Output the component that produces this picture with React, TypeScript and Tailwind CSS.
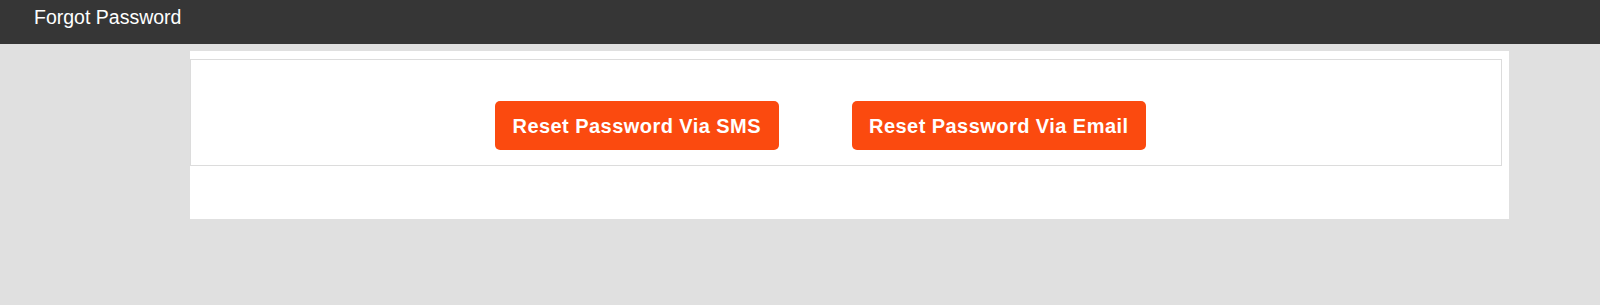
import React from "react";

export default function App() {
  return (
    <div className="min-h-[305px] w-full bg-[#e0e0e0] font-['Liberation_Sans',Arial,sans-serif]">
      <header className="h-[44px] bg-[#363636] pl-[34px] pt-[6px]">
        <h1 className="text-[19.5px] leading-[23px] font-normal text-white">Forgot Password</h1>
      </header>
      <div className="ml-[190px] mt-[7px] h-[168px] w-[1319px] bg-white pr-[7px] pt-[8px]">
        <div className="flex h-[107px] gap-[73px] border border-[#dcdcdc] pl-[304px] pt-[41px]">
          <button className="flex h-[49px] items-center justify-center rounded-[5px] bg-[#fb4a0f] px-[17.5px] text-[20px] font-bold tracking-[0.45px] text-white">
            Reset Password Via SMS
          </button>
          <button className="flex h-[49px] items-center justify-center rounded-[5px] bg-[#fb4a0f] px-[17.5px] text-[20px] font-bold tracking-[0.45px] text-white">
            Reset Password Via Email
          </button>
        </div>
      </div>
    </div>
  );
}
